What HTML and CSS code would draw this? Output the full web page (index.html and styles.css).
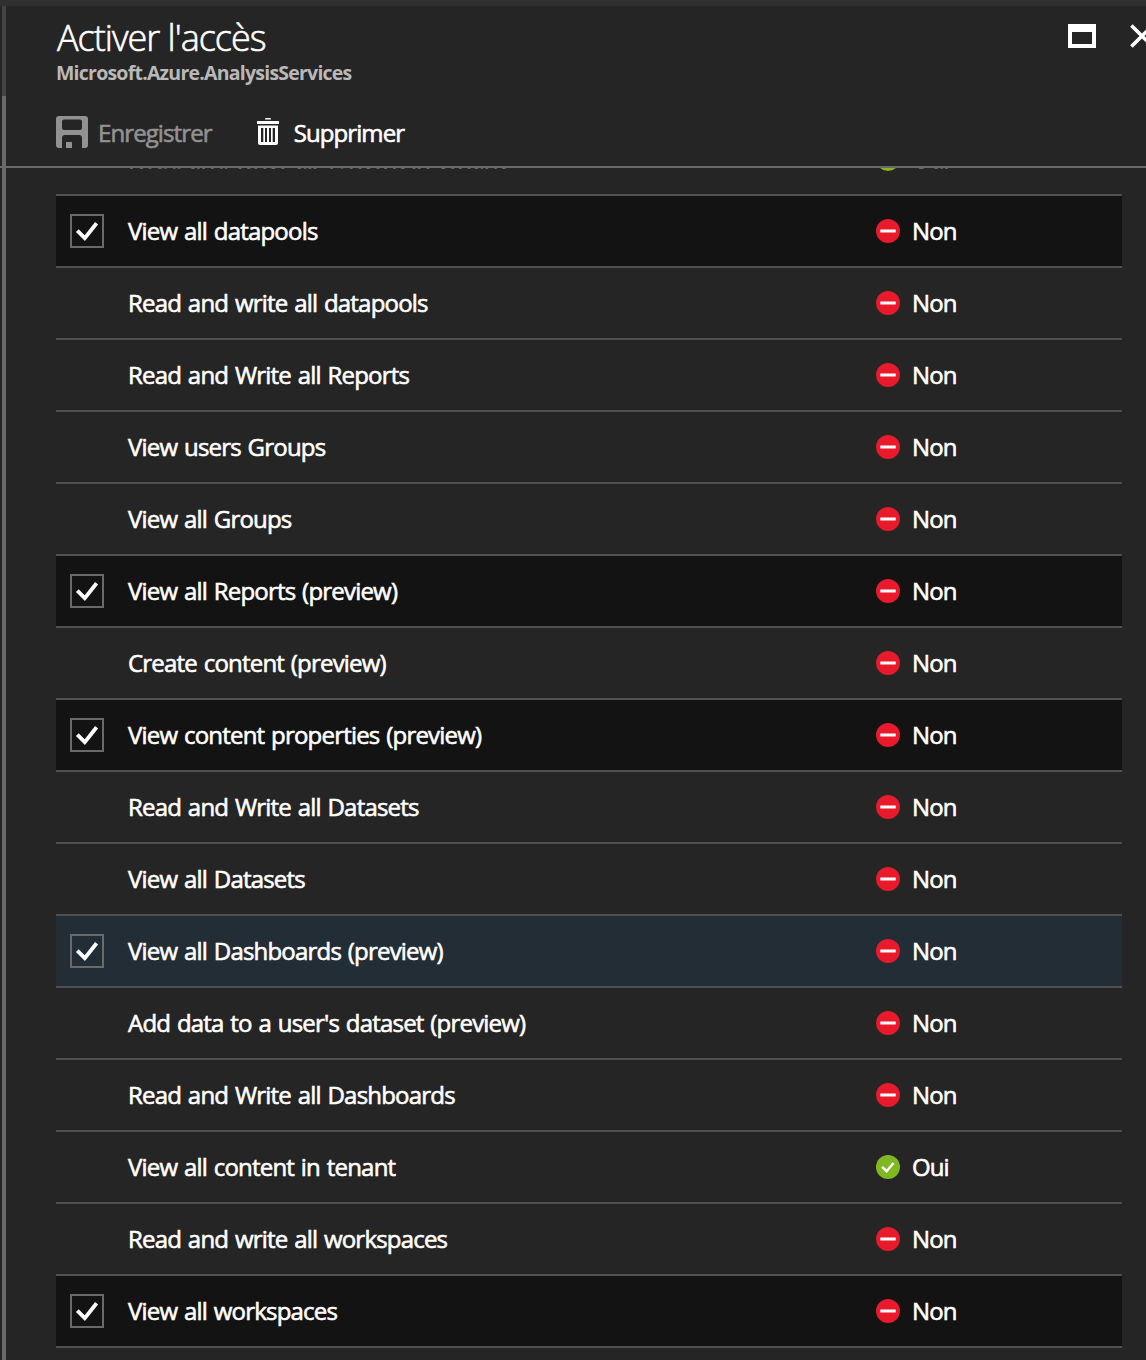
FILE: index.html
```html
<!DOCTYPE html>
<html lang="fr">
<head>
<meta charset="utf-8">
<title>Activer l'accès</title>
<link rel="stylesheet" href="styles.css">
</head>
<body>
<svg width="0" height="0" class="defs">
  <symbol id="no" viewBox="0 0 24 24"><circle cx="12" cy="12" r="12" fill="#e81a2c"/><path d="M4.3 10.500h15.400v3H4.300z" fill="#fff"/></symbol>
  <symbol id="yes" viewBox="0 0 24 24"><circle cx="12" cy="12" r="12" fill="#80b822"/><path d="M6.100 11.800l4.500 4.400 6.900-8.300" fill="none" stroke="#fff" stroke-width="2.400"/></symbol>
  <symbol id="check" viewBox="0 0 30 30"><path d="M5.300 14.600l7.500 7.600L24.600 7.300" fill="none" stroke="#fff" stroke-width="3.800"/></symbol>
</svg>
<div class="blade">
  <div class="rail"><div class="rail-top"></div><div class="rail-thumb"></div></div>
  <header class="header">
    <div class="titles">
      <h1 class="title">Activer l'accès</h1>
      <h2 class="subtitle">Microsoft.Azure.AnalysisServices</h2>
    </div>
    <div class="window-buttons">
      <svg width="28" height="24" viewBox="0 0 28 24"><path fill="#fff" fill-rule="evenodd" d="M0 0h28v24H0zM4 8v12h20V8z"/></svg>
      <svg width="24" height="24" viewBox="0 0 24 24"><path d="M1.400 1.400l21.200 21.200M22.600 1.400L1.400 22.600" stroke="#fff" stroke-width="3.600" fill="none"/></svg>
    </div>
  </header>
  <nav class="toolbar">
    <span class="command disabled">
      <svg width="32" height="32" viewBox="0 0 32 32"><path fill="#929292" fill-rule="evenodd" d="M3 0h26a3 3 0 0 1 3 3v26a3 3 0 0 1-3 3h-3V22q0-3-3-3H9q-3 0-3 3v10H3a3 3 0 0 1-3-3V3a3 3 0 0 1 3-3zM8 3.500Q6 3.500 6 5.500v6.500q0 2 2 2h16q2 0 2-2V5.500q0-2-2-2zM10 26h6v6h-6z"/></svg>
      <span class="label">Enregistrer</span>
    </span>
    <span class="command">
      <svg width="22" height="28" viewBox="0 0 22 28"><path fill="#fff" fill-rule="evenodd" d="M8 1q0-1 1-1h4q1 0 1 1v.6H8zM0 3h22v3H0zM1 7.500h20V25q0 2-2 2H3q-2 0-2-2zM4 10v14h2.300V10zM8 10v14h2V10zM12 10v14h2V10zM15.700 10v14H18V10z"/></svg>
      <span class="label">Supprimer</span>
    </span>
  </nav>
  <main class="list">
    <div class="row clipped"><span></span><span class="name">Read and write all content in tenant</span><svg class="status"><use href="#yes"/></svg><span>Oui</span></div>
    <div class="row selected"><span class="box"><svg><use href="#check"/></svg></span><span class="name">View all datapools</span><svg class="status"><use href="#no"/></svg><span>Non</span></div>
    <div class="row"><span></span><span class="name">Read and write all datapools</span><svg class="status"><use href="#no"/></svg><span>Non</span></div>
    <div class="row"><span></span><span class="name">Read and Write all Reports</span><svg class="status"><use href="#no"/></svg><span>Non</span></div>
    <div class="row"><span></span><span class="name">View users Groups</span><svg class="status"><use href="#no"/></svg><span>Non</span></div>
    <div class="row"><span></span><span class="name">View all Groups</span><svg class="status"><use href="#no"/></svg><span>Non</span></div>
    <div class="row selected"><span class="box"><svg><use href="#check"/></svg></span><span class="name">View all Reports (preview)</span><svg class="status"><use href="#no"/></svg><span>Non</span></div>
    <div class="row"><span></span><span class="name">Create content (preview)</span><svg class="status"><use href="#no"/></svg><span>Non</span></div>
    <div class="row selected"><span class="box"><svg><use href="#check"/></svg></span><span class="name">View content properties (preview)</span><svg class="status"><use href="#no"/></svg><span>Non</span></div>
    <div class="row"><span></span><span class="name">Read and Write all Datasets</span><svg class="status"><use href="#no"/></svg><span>Non</span></div>
    <div class="row"><span></span><span class="name">View all Datasets</span><svg class="status"><use href="#no"/></svg><span>Non</span></div>
    <div class="row hovered"><span class="box"><svg><use href="#check"/></svg></span><span class="name">View all Dashboards (preview)</span><svg class="status"><use href="#no"/></svg><span>Non</span></div>
    <div class="row"><span></span><span class="name">Add data to a user's dataset (preview)</span><svg class="status"><use href="#no"/></svg><span>Non</span></div>
    <div class="row"><span></span><span class="name">Read and Write all Dashboards</span><svg class="status"><use href="#no"/></svg><span>Non</span></div>
    <div class="row"><span></span><span class="name">View all content in tenant</span><svg class="status"><use href="#yes"/></svg><span>Oui</span></div>
    <div class="row"><span></span><span class="name">Read and write all workspaces</span><svg class="status"><use href="#no"/></svg><span>Non</span></div>
    <div class="row selected"><span class="box"><svg><use href="#check"/></svg></span><span class="name">View all workspaces</span><svg class="status"><use href="#no"/></svg><span>Non</span></div>
  </main>
</div>
</body>
</html>
```
FILE: styles.css
```css
* { box-sizing: border-box; }
body {
  margin: 0;
  height: 1360px;
  overflow: hidden;
  background: #252525;
  color: #fff;
  font: 500 24px/32px "Open Sans", "Noto Sans", sans-serif;
  letter-spacing: -0.9px;
  -webkit-text-stroke: 0.6px currentColor;
}
svg { display: block; flex: none; }
.defs { position: absolute; }
.blade {
  display: grid;
  grid-template-columns: 6px 1fr;
  grid-template-rows: 90px 72px 1fr;
  height: 1360px;
  border-top: 6px solid #303030;
}
.rail {
  grid-row: 1 / 4;
  display: flex;
  flex-direction: column;
  padding-left: 2px;
}
.rail-top { height: 90px; background: #444; }
.rail-thumb { flex: 1; background: #6a6a6a; }
.header {
  display: flex;
  justify-content: space-between;
  padding-left: 50px;
  overflow: hidden;
}
.title {
  margin: 8px 0 0 1px;
  font-size: 36px;
  line-height: 48px;
  font-weight: 300;
  letter-spacing: -1px;
}
.subtitle {
  margin: -3px 0 0;
  font-size: 19.5px;
  line-height: 28px;
  font-weight: 700;
  letter-spacing: -0.77px;
  color: #b9b9b9;
  -webkit-text-stroke: 0;
}
.window-buttons {
  display: flex;
  gap: 34px;
  padding-top: 18px;
  margin-right: -8px;
}
.toolbar {
  display: flex;
  align-items: center;
  gap: 45px;
  margin-left: -6px;
  padding: 2px 0 0 56px;
  border-bottom: 2px solid #6a6a6a;
}
.command { display: flex; align-items: center; gap: 15px; }
.disabled { gap: 10px; color: #929292; }
.label { padding-top: 2px; }
.list {
  overflow: hidden;
  padding: 0 24px 0 50px;
}
.row {
  display: grid;
  grid-template-columns: 58px 748px 24px 1fr;
  align-items: center;
  height: 72px;
  padding-left: 14px;
  border-bottom: 2px solid #505050;
  white-space: nowrap;
}
.name { letter-spacing: -0.8px; word-spacing: 1.3px; }
.row > :last-child { padding-left: 12px; }
.clipped { margin-top: -44px; }
.selected { background: #131313; }
.hovered { background: #232d36; }
.box {
  width: 34px;
  height: 34px;
  border: 2px solid #6a6a6a;
}
.box svg { width: 30px; height: 30px; }
.status { width: 24px; height: 24px; }
```
